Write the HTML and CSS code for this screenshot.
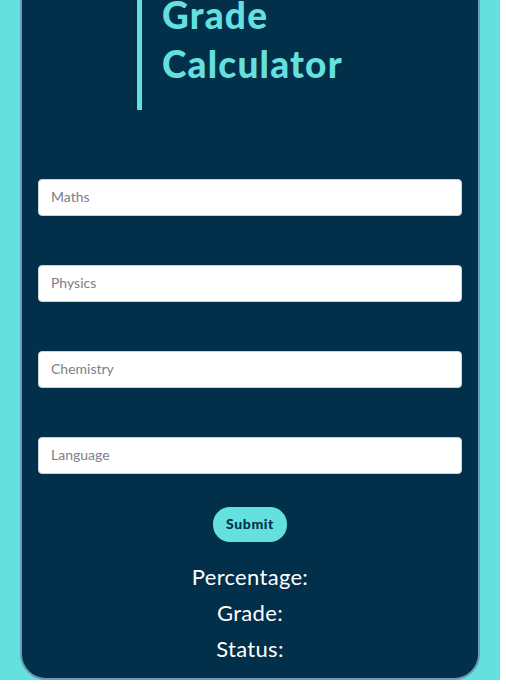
FILE: index.html
```html
<!DOCTYPE html>
<html>
<head>
<meta charset="utf-8">
<link rel="stylesheet" href="styles.css">
</head>
<body>
<div class="page">
  <main class="card">
    <header class="title">
      <h1>Grade<br>Calculator</h1>
    </header>
    <form class="form">
      <div class="fields">
        <input type="text" placeholder="Maths">
        <input type="text" placeholder="Physics">
        <input type="text" placeholder="Chemistry">
        <input type="text" placeholder="Language">
      </div>
      <button type="button" class="submit">Submit</button>
    </form>
    <section class="results">
      <p>Percentage:</p>
      <p>Grade:</p>
      <p>Status:</p>
    </section>
  </main>
</div>
</body>
</html>
```
FILE: styles.css
```css
html, body {
  margin: 0;
  padding: 0;
  background: #ffffff;
  font-family: "Lato", "Open Sans", sans-serif;
}
.page {
  width: 500px;
  height: 680px;
  background: #64e0df;
  overflow: hidden;
}
.card {
  box-sizing: border-box;
  width: 460px;
  height: 700px;
  margin: -20px 20px 0;
  background: #022f4a;
  border: 2px solid #6a9bb8;
  border-radius: 0 0 26px 26px;
  display: flex;
  flex-direction: column;
}
.title {
  margin-left: 115px;
  border-left: 5px solid #64e0df;
  padding: 8px 0 22px 20px;
}
.title h1 {
  margin: 0;
  color: #64e0df;
  font-size: 37px;
  line-height: 49px;
  font-weight: 900;
  letter-spacing: 1.2px;
}
.form {
  display: flex;
  flex-direction: column;
  align-items: center;
  padding: 0 16px;
  margin-top: 69px;
}
.fields {
  width: 100%;
  display: flex;
  flex-direction: column;
  gap: 49px;
}
.fields input {
  box-sizing: border-box;
  width: 100%;
  height: 37px;
  border: 1px solid #c9d3dc;
  border-radius: 4px;
  background: #ffffff;
  padding: 0 12px 3px;
  font-family: inherit;
  font-size: 14px;
  color: #333;
  outline: none;
}
.fields input::placeholder {
  color: #7a7f88;
}
.submit {
  margin-top: 33px;
  width: 74px;
  height: 35px;
  border: none;
  border-radius: 17px;
  background: #64e0df;
  color: #022f4a;
  font-family: inherit;
  font-weight: 900;
  font-size: 14px;
  letter-spacing: 0.6px;
  padding: 0 0 3px;
}
.results {
  margin-top: 17px;
  display: flex;
  flex-direction: column;
  align-items: center;
}
.results p {
  margin: 0;
  color: #ffffff;
  font-size: 22px;
  line-height: 36px;
  letter-spacing: 0.3px;
}
```
